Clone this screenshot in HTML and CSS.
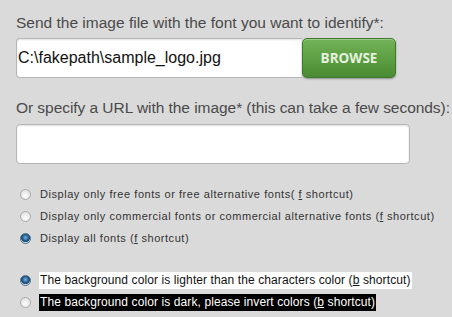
FILE: index.html
```html
<!DOCTYPE html>
<html>
<head>
<meta charset="utf-8">
<link rel="stylesheet" href="styles.css">
</head>
<body>
<div class="form">
  <div class="label">Send the image file with the font you want to identify*:</div>
  <div class="file-row">
    <div class="input file-input">C:\fakepath\sample_logo.jpg</div>
    <div class="browse">BROWSE</div>
  </div>
  <div class="label label2">Or specify a URL with the image* (this can take a few seconds):</div>
  <div class="input url-input"></div>
  <ul class="options">
    <li><span class="radio"></span><span class="opt">Display only free fonts or free alternative fonts( <u>f</u> shortcut)</span></li>
    <li><span class="radio"></span><span class="opt">Display only commercial fonts or commercial alternative fonts (<u>f</u> shortcut)</span></li>
    <li><span class="radio checked"></span><span class="opt">Display all fonts (<u>f</u> shortcut)</span></li>
  </ul>
  <ul class="options bg">
    <li><span class="radio checked"></span><span class="opt light">The background color is lighter than the characters color (<u>b</u> shortcut)</span></li>
    <li><span class="radio"></span><span class="opt dark">The background color is dark, please invert colors (<u>b</u> shortcut)</span></li>
  </ul>
</div>
</body>
</html>
```
FILE: styles.css
```css
html, body {
  margin: 0;
  padding: 0;
  background: #dadada;
  font-family: "Liberation Sans", Arial, sans-serif;
}
.form {
  padding: 13px 0 0 16px;
}
.label {
  font-size: 15.5px;
  line-height: 20px;
  color: #4a4a4a;
  white-space: nowrap;
}
.file-row {
  display: flex;
  margin-top: 5px;
  width: 380px;
}
.input {
  box-sizing: border-box;
  height: 40px;
  background: #fff;
  border: 1px solid #b5b5b5;
  border-radius: 4px;
  box-shadow: inset 0 1px 2px rgba(0,0,0,0.12);
}
.file-input {
  width: 286px;
  border-radius: 4px 0 0 4px;
  border-right: none;
  font-size: 16px;
  line-height: 38px;
  color: #111;
  padding-left: 1px;
}
.browse {
  box-sizing: border-box;
  width: 94px;
  height: 40px;
  border: 1px solid #3f7a2c;
  border-radius: 5px;
  background: linear-gradient(#72b258, #5c9e42 55%, #4a8a33);
  box-shadow: 0 1px 2px rgba(0,0,0,0.35), inset 0 1px 0 rgba(255,255,255,0.3);
  color: #e6f1df;
  font-family: "Open Sans", sans-serif;
  font-weight: bold;
  font-size: 13.5px;
  line-height: 38px;
  text-align: center;
}
.label2 {
  margin-top: 20px;
  letter-spacing: -0.05px;
}
.url-input {
  width: 394px;
  margin-top: 6px;
}
.options {
  list-style: none;
  margin: 19px 0 0 4px;
  padding: 0;
}
.options li {
  display: flex;
  align-items: center;
  height: 22px;
}
.radio {
  box-sizing: border-box;
  width: 11px;
  height: 11px;
  border-radius: 50%;
  border: 1px solid #a9a9a9;
  background: radial-gradient(circle at 50% 65%, #ffffff, #e4e4e4 70%);
  margin-right: 9px;
}
.radio.checked {
  border-color: #4b6a86;
  background: radial-gradient(circle at 50% 40%, #7ab0dc, #1e5a8c 45%, #204a70 60%, #d8e4ee 70%, #ffffff);
}
.opt {
  font-size: 11px;
  color: #333;
  letter-spacing: 0.55px;
}
.bg {
  margin-top: 20px;
}
.bg .opt {
  font-size: 12px;
  letter-spacing: 0.1px;
  padding: 1px 1px 2px 1px;
  margin-left: -1px;
}
.light {
  background: #fff;
  color: #111;
}
.dark {
  background: #000;
  color: #fff;
}
```
